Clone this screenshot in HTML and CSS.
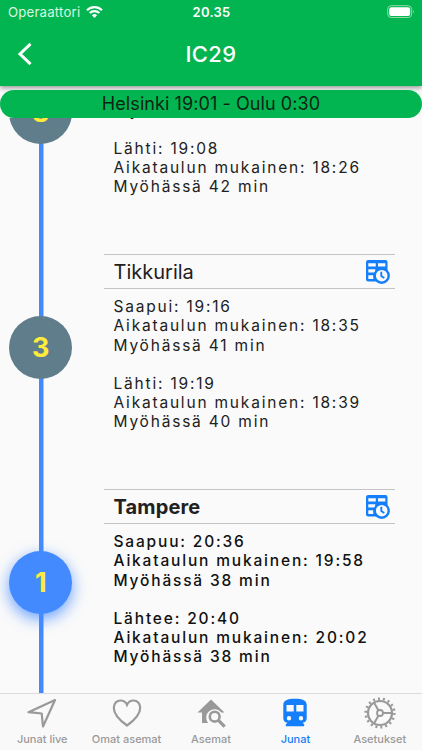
FILE: index.html
```html
<!DOCTYPE html>
<html lang="fi">
<head>
<meta charset="utf-8">
<title>IC29</title>
<link rel="stylesheet" href="styles.css">
</head>
<body>
<svg class="defs" width="0" height="0" aria-hidden="true">
  <symbol id="timetable" viewBox="0 0 24 24">
    <rect x="0" y="0" width="21.500" height="21.500" rx="2.200" fill="currentColor"/>
    <path d="M2.300 3.300h7.500v3.200H2.300zM12 3.300h7.300v3.200H12zM2.300 9.200h7v3.200h-7zM2.300 15.300h5v3.600h-5z" fill="#fafafa"/>
    <circle cx="15.700" cy="15.700" r="7" fill="#fafafa" stroke="currentColor" stroke-width="2.400"/>
    <path d="M15.300 11.800v4.300l3 1.900" fill="none" stroke="currentColor" stroke-width="1.900"/>
  </symbol>
</svg>
<div class="app">
  <header class="top">
    <div class="status">
      <div class="carrier"><span>Operaattori</span>
        <svg width="17" height="12" viewBox="0 0 17 12" fill="none" stroke="#fff" stroke-width="2.200"><path d="M1 4.200a10.700 10.700 0 0 1 15 0M3.700 7a6.900 6.900 0 0 1 9.600 0"/><path d="M8.500 12l-2.600-2.700a3.700 3.700 0 0 1 5.200 0z" fill="#fff" stroke="none"/></svg>
      </div>
      <div class="clock">20.35</div>
      <svg class="battery" width="28" height="14" viewBox="0 0 28 14"><rect x=".7" y=".7" width="24" height="11.800" rx="3.500" fill="none" stroke="#8edbaa"/><rect x="2.200" y="2.200" width="21" height="8.800" rx="2.200" fill="#fff"/><path d="M26 4.600q1.500 2 0 4z" fill="#8edbaa"/></svg>
    </div>
    <div class="bar">
      <svg class="back" width="16" height="24" viewBox="0 0 16 24"><path d="M13.500 1.800L3 12l10.500 10.200" fill="none" stroke="#fff" stroke-width="3"/></svg>
      <h1>IC29</h1>
    </div>
  </header>
  <div class="route"><span>Helsinki 19:01 - Oulu 0:30</span></div>
  <main class="list">
    <section class="stop">
      <div class="rail"><div class="dot">3</div></div>
      <div class="info first">
        <p>Myöhässä 42 min</p>
        <p>Lähti: 19:08<br>Aikataulun mukainen: 18:26<br>Myöhässä 42 min</p>
      </div>
    </section>
    <section class="stop">
      <div class="rail"><div class="dot">3</div></div>
      <div class="info">
        <div class="name"><h2>Tikkurila</h2><svg class="tt"><use href="#timetable"/></svg></div>
        <p>Saapui: 19:16<br>Aikataulun mukainen: 18:35<br>Myöhässä 41 min</p>
        <p>Lähti: 19:19<br>Aikataulun mukainen: 18:39<br>Myöhässä 40 min</p>
      </div>
    </section>
    <section class="stop current">
      <div class="rail"><div class="dot">1</div></div>
      <div class="info">
        <div class="name"><h2>Tampere</h2><svg class="tt"><use href="#timetable"/></svg></div>
        <p>Saapuu: 20:36<br>Aikataulun mukainen: 19:58<br>Myöhässä 38 min</p>
        <p>Lähtee: 20:40<br>Aikataulun mukainen: 20:02<br>Myöhässä 38 min</p>
      </div>
    </section>
  </main>
  <nav class="tabs">
    <a class="tab"><svg viewBox="0 0 32 32"><path d="M29 3L2.500 15.200 15.700 16.500 17 29.500z" fill="none" stroke="currentColor" stroke-width="2.200" stroke-linejoin="round"/></svg><span>Junat live</span></a>
    <a class="tab"><svg viewBox="0 0 32 32"><path d="M16 28.500C11 25 2.800 18.500 2.800 10.800 2.800 6.500 5.700 3.500 9.500 3.500c3.500 0 5.500 2 6.500 4.300 1-2.300 3-4.300 6.500-4.300 3.800 0 6.700 3 6.700 7.300 0 7.700-8.200 14.200-13.200 17.700z" fill="none" stroke="currentColor" stroke-width="2.200"/></svg><span>Omat asemat</span></a>
    <a class="tab"><svg viewBox="0 0 32 32"><path d="M16 2.500L29.500 15.500h-3.200a8.200 8.200 0 0 0-13.300 10.500H7V15.500H2.500z" fill="currentColor"/><circle cx="19.700" cy="19.700" r="4.900" fill="none" stroke="currentColor" stroke-width="2.600"/><path d="M23.200 23.200l6.500 6.500" stroke="currentColor" stroke-width="3.200"/></svg><span>Asemat</span></a>
    <a class="tab active"><svg viewBox="0 0 32 32"><path fill="currentColor" fill-rule="evenodd" d="M4.300 8c0-4.700 4-6.300 11.700-6.300S27.700 3.300 27.700 8v13.200c0 2.500-1.700 4.300-4 4.600l1.500 1.700V29.300H6.800V27.500l1.500-1.700c-2.300-.3-4-2.100-4-4.600zM7.500 8v6.500h7.200V8zM17.300 8v6.500h7.200V8zM10 19a2.200 2.200 0 1 0 0 4.400 2.200 2.200 0 0 0 0-4.400zM22 19a2.200 2.200 0 1 0 0 4.400 2.200 2.200 0 0 0 0-4.400z"/></svg><span>Junat</span></a>
    <a class="tab"><svg viewBox="0 0 32 32" fill="none" stroke="currentColor"><circle cx="16" cy="16" r="14.300" stroke-width="2.600" stroke-dasharray="2 2.992"/><circle cx="16" cy="16" r="12" stroke-width="2.200"/><circle cx="16" cy="16" r="3" stroke-width="1.800"/><path d="M19 16h9M14.500 13.400L10 5.600M14.500 18.600L10 26.400" stroke-width="2"/></svg><span>Asetukset</span></a>
  </nav>
</div>
</body>
</html>
```
FILE: styles.css
```css
* { box-sizing: border-box; margin: 0; }
body { font-family: Inter, "Liberation Sans", sans-serif; background: #fafafa; }
.defs { display: block; }
.app { width: 422px; height: 750px; display: flex; flex-direction: column; overflow: hidden; }
.top { height: 86px; flex: none; background: #03b550; color: #fff; box-shadow: 0 2px 5px rgba(0,0,0,.4); z-index: 1; }
.status { display: grid; grid-template-columns: 1fr auto 1fr; height: 24px; align-items: center; padding: 0 7px 0 8px; }
.carrier { display: flex; align-items: center; gap: 6px; font-size: 13.200px; color: #d8f5e2; letter-spacing: .2px; }
.clock { font-size: 13px; font-weight: 600; letter-spacing: .25px; }
.battery { justify-self: end; }
.bar { display: grid; grid-template-columns: 60px 1fr 60px; height: 60px; align-items: center; }
.back { margin-left: 17px; }
h1 { font-size: 22px; font-weight: 500; letter-spacing: .4px; text-align: center; }
.route { flex: none; height: 27.500px; margin-top: 4px; border-radius: 14px; background: #03b550; color: #0b2414; font-size: 18px; letter-spacing: .08px; display: flex; align-items: center; justify-content: center; z-index: 2; }
.list { flex: 1; min-height: 0; overflow: hidden; display: flex; flex-direction: column; justify-content: flex-end; }
.stop { flex: none; height: 235px; display: flex; }
.stop:last-child { height: 204px; }
.rail { width: 104px; flex: none; padding: 62px 0 0 9.300px; background: linear-gradient(#448aff, #448aff) 38.500px 0 / 4.500px 100% no-repeat; }
.dot { width: 63px; height: 63px; border-radius: 50%; background: #607d8b; color: #ffeb3b; font-size: 27px; font-weight: 700; display: flex; align-items: center; justify-content: center; }
.current .dot { background: #448aff; box-shadow: 0 5px 15px rgba(68,138,255,.8); }
.info { width: 291px; color: #212121; }
.first { padding-top: 73.500px; }
.name { height: 35px; border-top: 1px solid #c4c4c7; border-bottom: 1px solid #c4c4c7; padding: 0 5.200px 0 9.500px; display: flex; align-items: center; justify-content: space-between; }
h2 { font-size: 20px; font-weight: 400; }
.tt { width: 24px; height: 24px; color: #147efb; }
p { padding-left: 9.500px; margin: 8.400px 0 19px; font-size: 15.500px; line-height: 19.100px; letter-spacing: 1.800px; white-space: nowrap; }
p + p { margin-top: 0; }
.current h2 { font-weight: 700; letter-spacing: .15px; }
.current p { font-weight: 500; letter-spacing: 1.830px; color: #111; }
.tabs { flex: none; height: 57px; display: flex; border-top: 1px solid #dcdcdc; background: #f9f9f9; z-index: 2; }
.tab { flex: 1; display: flex; flex-direction: column; align-items: center; padding-top: 3px; color: #999; font-size: 11px; font-weight: 500; }
.tab svg { width: 32px; height: 32px; }
.tab span { margin-top: 3px; white-space: nowrap; }
.active { color: #147efb; }
```
